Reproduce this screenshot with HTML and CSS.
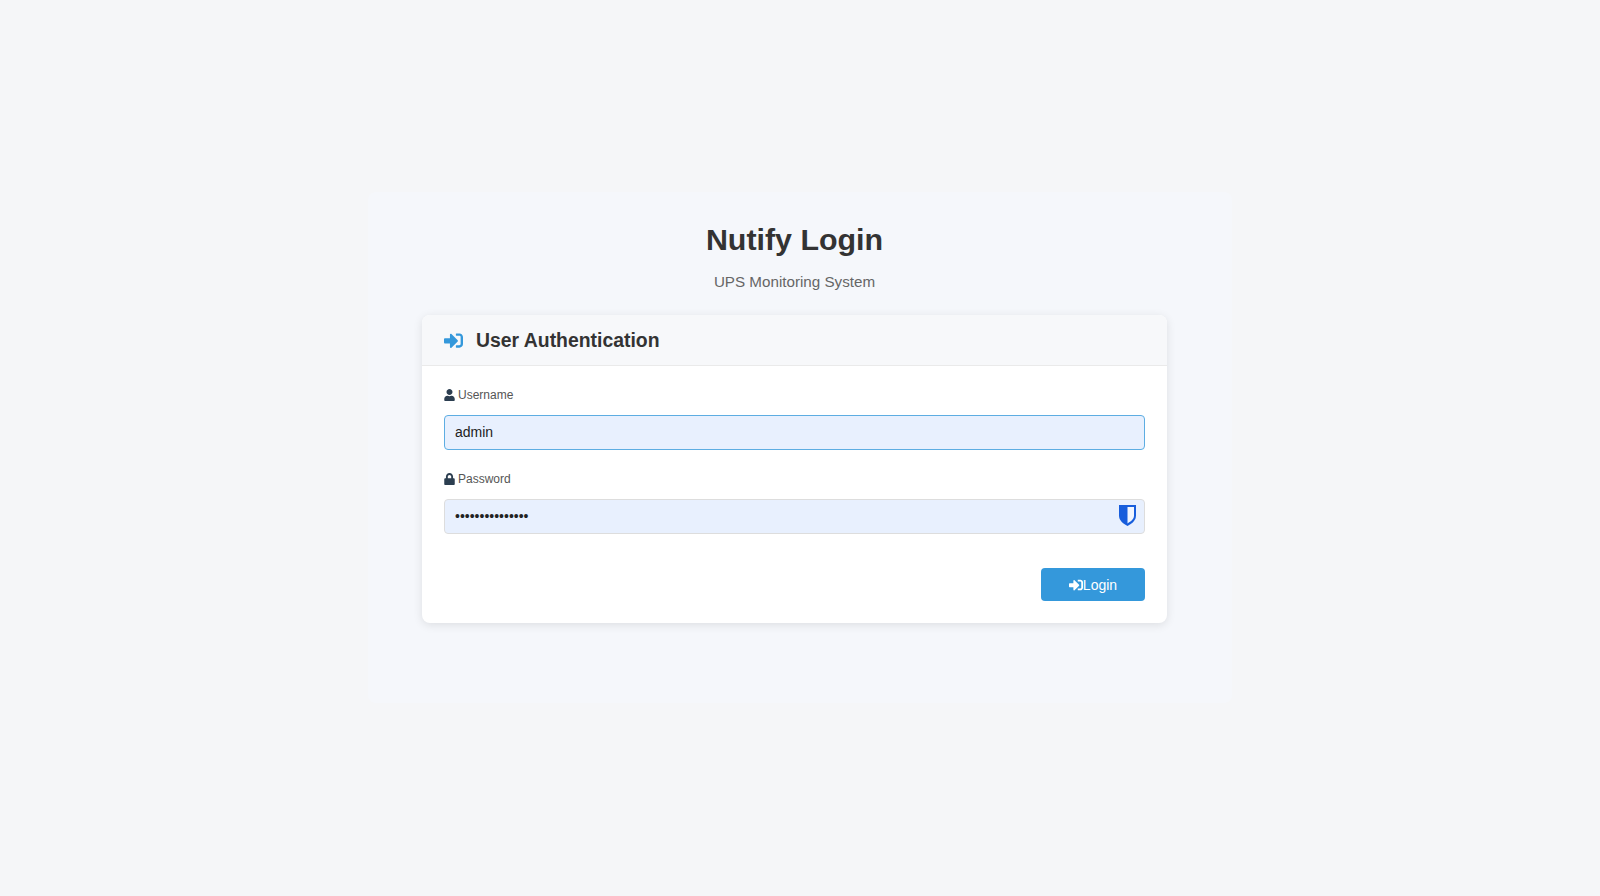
FILE: index.html
```html
<!DOCTYPE html>
<html lang="en">
<head>
<meta charset="utf-8">
<title>Nutify Login</title>
<link rel="stylesheet" href="styles.css">
</head>
<body>
<main class="shell">
  <header class="brand">
    <h1>Nutify Login</h1>
    <p>UPS Monitoring System</p>
  </header>
  <section class="card">
    <div class="card-head">
      <svg class="head-icon" viewBox="0 0 512 512"><path d="M416 448h-84c-6.600 0-12-5.400-12-12v-40c0-6.600 5.400-12 12-12h84c17.700 0 32-14.300 32-32V160c0-17.700-14.300-32-32-32h-84c-6.600 0-12-5.400-12-12V76c0-6.600 5.400-12 12-12h84c53 0 96 43 96 96v192c0 53-43 96-96 96zm-47-201L201 79c-15-15-41-4.500-41 17v96H24c-13.300 0-24 10.700-24 24v96c0 13.300 10.700 24 24 24h136v96c0 21.500 26 32 41 17l168-168c9.300-9.400 9.300-24.600 0-34z"/></svg>
      <h2>User Authentication</h2>
    </div>
    <form class="card-body">
      <div class="field">
        <label class="field-label">
          <svg class="label-icon" viewBox="0 0 448 512"><path d="M224 256c70.700 0 128-57.300 128-128S294.700 0 224 0 96 57.300 96 128s57.300 128 128 128zm89.600 32h-16.700c-22.200 10.200-46.900 16-72.900 16s-50.600-5.800-72.900-16h-16.700C60.200 288 0 348.200 0 422.400V464c0 26.500 21.500 48 48 48h352c26.500 0 48-21.500 48-48v-41.600c0-74.200-60.200-134.400-134.400-134.400z"/></svg>
          Username
        </label>
        <input class="input input-focus" type="text" value="admin">
      </div>
      <div class="field">
        <label class="field-label">
          <svg class="label-icon" viewBox="0 0 448 512"><path d="M400 224h-24v-72C376 68.200 307.800 0 224 0S72 68.200 72 152v72H48c-26.500 0-48 21.500-48 48v192c0 26.500 21.500 48 48 48h352c26.500 0 48-21.500 48-48V272c0-26.500-21.500-48-48-48zm-104 0H152v-72c0-39.700 32.300-72 72-72s72 32.300 72 72v72z"/></svg>
          Password
        </label>
        <div class="input-wrap">
          <input class="input" type="password" value="nutifypassword1">
          <svg class="shield" viewBox="0 0 17 21"><path class="shield-outer" d="M0 0h17v10.500c0 5-4 8-8.500 10.500C4 18.500 0 15.500 0 10.500z"/><path class="shield-inner" d="M8.500 2H15v8.500c0 3.600-3 5.800-6.500 7.900z"/></svg>
        </div>
      </div>
      <div class="actions">
        <button class="btn" type="button">
          <svg class="btn-icon" viewBox="0 0 512 512"><path d="M416 448h-84c-6.600 0-12-5.400-12-12v-40c0-6.600 5.400-12 12-12h84c17.700 0 32-14.300 32-32V160c0-17.700-14.300-32-32-32h-84c-6.600 0-12-5.400-12-12V76c0-6.600 5.400-12 12-12h84c53 0 96 43 96 96v192c0 53-43 96-96 96zm-47-201L201 79c-15-15-41-4.500-41 17v96H24c-13.300 0-24 10.700-24 24v96c0 13.300 10.700 24 24 24h136v96c0 21.500 26 32 41 17l168-168c9.300-9.400 9.300-24.600 0-34z"/></svg>Login
        </button>
      </div>
    </form>
  </section>
</main>
</body>
</html>
```
FILE: styles.css
```css
* { box-sizing: border-box; }
html, body { height: 100%; }
body {
  margin: 0;
  background: #f5f6f8;
  font-family: "Liberation Sans", Arial, sans-serif;
  color: #333;
  display: flex;
  align-items: center;
  justify-content: center;
}
.shell {
  width: 864px;
  height: 511px;
  margin-top: -1px;
  padding: 29px 65px 0 54px;
  background: #f5f7fb;
  border-radius: 8px;
}
.brand { text-align: center; margin-bottom: 25px; }
.brand h1 {
  margin: 0;
  font-size: 30.4px;
  line-height: 37px;
  font-weight: 700;
  color: #333;
}
.brand p {
  margin: 15px 0 0;
  font-size: 15.2px;
  line-height: 17px;
  color: #666;
}
.card {
  background: #fff;
  border-radius: 8px;
  box-shadow: 0 2px 10px rgba(0, 0, 0, 0.1);
  overflow: hidden;
}
.card-head {
  display: flex;
  align-items: center;
  gap: 13px;
  height: 51px;
  padding: 0 22px;
  background: #f7f8fa;
  border-bottom: 1px solid #eaeaea;
}
.head-icon { width: 19px; height: 19px; fill: #3498db; }
.card-head h2 {
  margin: 0;
  font-size: 19.4px;
  line-height: 23px;
  font-weight: 700;
  color: #333;
}
.card-body { padding: 21px 22px 22px; }
.field { margin-bottom: 21px; }
.field-label {
  display: flex;
  align-items: center;
  gap: 3px;
  height: 16px;
  margin-bottom: 12px;
  font-size: 12px;
  color: #555;
}
.label-icon { width: 11px; height: 12px; fill: #2c3e50; }
.input-wrap { position: relative; }
.input {
  display: block;
  width: 100%;
  height: 35px;
  padding: 0 10px 1px;
  background: #e8f0fe;
  border: 1px solid #ddd;
  border-radius: 4px;
  font-family: inherit;
  font-size: 14px;
  color: #222;
  outline: none;
}
.input-focus { border-color: #5dade2; }
.shield {
  position: absolute;
  top: 6px;
  right: 9px;
  width: 17px;
  height: 21px;
}
.shield-outer { fill: #175ddc; }
.shield-inner { fill: #f0f5ff; }
.actions {
  display: flex;
  justify-content: flex-end;
  margin-top: 34px;
}
.btn {
  display: flex;
  align-items: center;
  justify-content: center;
  width: 104px;
  height: 33px;
  padding: 0;
  background: #3498db;
  border: 0;
  border-radius: 4px;
  font-family: inherit;
  font-size: 14px;
  color: #fff;
}
.btn-icon { width: 14px; height: 14px; fill: #fff; }
```
